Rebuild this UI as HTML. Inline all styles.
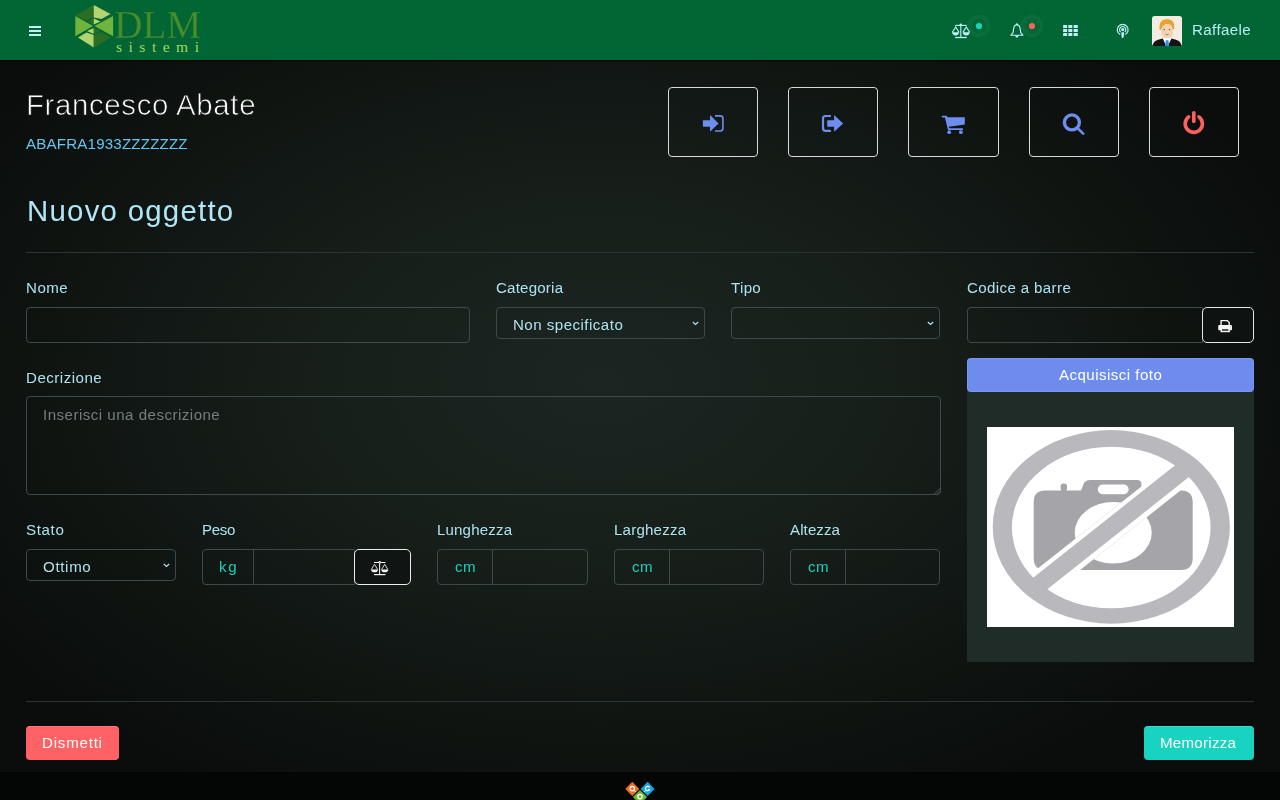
<!DOCTYPE html>
<html><head><meta charset="utf-8">
<style>
*{box-sizing:border-box;margin:0;padding:0}
html,body{width:1280px;height:800px;overflow:hidden}
body{font-family:"Liberation Sans",sans-serif;position:relative;background:#0b0e0d;}
#bg{position:absolute;left:0;top:60px;width:1280px;height:712px;background:radial-gradient(ellipse 58% 66% at 47% 45%, #1c2521 0%, #171f1b 38%, #0f1411 75%, #0a0d0c 100%);}
#foot{position:absolute;left:0;top:772px;width:1280px;height:28px;background:#040505}
#hdr{position:absolute;left:0;top:0;width:1280px;height:60px;background:#016633;}
#hdrsh{position:absolute;left:0;top:60px;width:1280px;height:2px;background:linear-gradient(rgba(0,0,0,.9),rgba(0,0,0,0))}
.abs{position:absolute}
.t{position:absolute;white-space:nowrap;line-height:1;font-size:15.1px;will-change:transform}
.lbl{color:#ade2ef}
.box{position:absolute;border:1px solid #394b4d;border-radius:4px}
.btn5{position:absolute;top:87px;width:90px;height:70px;border:1px solid #d9d9d9;border-radius:4px}
.btn5 svg{position:absolute;left:-1px;top:-1px}
.ibox{position:absolute;top:549px;height:36px;border:1px solid #394b4d;border-radius:4px}
.addon{position:absolute;top:0;left:0;height:34px;border-right:1px solid #394b4d}
.unit{position:absolute;color:#1bd0b9;top:9.2px;white-space:nowrap;line-height:1;font-size:15.1px;will-change:transform}
.chev{position:absolute}
</style></head><body>
<div id="bg"></div>
<div id="foot"></div>
<div id="hdr"></div>
<div id="hdrsh"></div>

<!-- hamburger -->
<svg class="abs" style="left:29px;top:26px" width="12" height="10" viewBox="0 0 12 10">
<rect x="0" y="0" width="12" height="2" fill="#c0f0fa"/>
<rect x="0" y="4" width="12" height="2" fill="#c0f0fa"/>
<rect x="0" y="8" width="12" height="2" fill="#c0f0fa"/>
</svg>

<!-- logo -->
<svg class="abs" style="left:70px;top:0px" width="140" height="60" viewBox="70 0 140 60">
<polygon points="93.75,5 76,15.2 86,20.8 93.75,17" fill="#2a6e25"/>
<polygon points="93.75,5 110.5,14 101.5,19 93.75,17.5" fill="#b3d46f"/>
<polygon points="75.3,16 75.3,36.3 93,26" fill="#6fb43c"/>
<polygon points="113.1,16 113.1,36.3 94.5,26" fill="#6fb43c"/>
<polygon points="87.5,21.5 93.75,18.5 93.75,24.5" fill="#2a6e25"/>
<polygon points="93.75,18.5 100.5,21.5 93.75,24.5" fill="#b3d46f"/>
<polygon points="87,31 93.75,28 93.75,34" fill="#b3d46f"/>
<polygon points="93.75,28 100.5,31 93.75,34" fill="#2a6e25"/>
<polygon points="78,37.5 86.5,32.5 93.75,35 93.75,47.5" fill="#b3d46f"/>
<polygon points="93.75,35 101,32 111,37.5 93.75,47.5" fill="#2a6e25"/>
<text x="114" y="38.3" font-family="Liberation Serif" font-size="40" fill="#4a8d2a" stroke="#016633" stroke-width="0.35" textLength="87" lengthAdjust="spacingAndGlyphs">DLM</text>
<text x="116" y="52.3" font-family="Liberation Serif" font-size="15.5" fill="#a6d65e" textLength="83" lengthAdjust="spacing">sistemi</text>
</svg>

<!-- header right icons -->
<svg class="abs" style="left:940px;top:10px" width="320" height="42" viewBox="940 10 320 42">
<!-- scale -->
<g stroke="#c0f0fa" fill="none" stroke-width="1.1">
<line x1="955.2" y1="25.4" x2="966.7" y2="25.4"/>
<line x1="960.8" y1="25" x2="960.8" y2="37"/>
<line x1="955.2" y1="37.5" x2="966.7" y2="37.5" stroke-width="1.3"/>
<polyline points="952.3,32.4 955.7,27 959,32.4"/>
<polyline points="962.9,32.4 966.3,27 969.7,32.4"/>
</g>
<circle cx="960.8" cy="24.8" r="1.2" fill="#c0f0fa"/>
<path d="M952,32.2 H959.2 Q958.5,35.4 955.6,35.4 Q952.7,35.4 952,32.2Z" fill="#c0f0fa"/>
<path d="M962.6,32.2 H969.8 Q969.1,35.4 966.2,35.4 Q963.3,35.4 962.6,32.2Z" fill="#c0f0fa"/>
<circle cx="979" cy="26" r="9.3" fill="none" stroke="rgba(255,255,255,0.045)" stroke-width="4"/>
<circle cx="979" cy="26" r="3.1" fill="#17d6bd"/>
<!-- bell -->
<path d="M1016.9,24.9 C1014.3,24.9 1013.7,27 1013.5,29.5 L1013.1,32.6 L1010.9,35.2 H1022.9 L1020.7,32.6 L1020.3,29.5 C1020.1,27 1019.5,24.9 1016.9,24.9Z" fill="none" stroke="#c0f0fa" stroke-width="1.15" stroke-linejoin="round"/>
<circle cx="1016.9" cy="24.3" r="1" fill="#c0f0fa"/>
<path d="M1015.2,35.6 H1018.6 Q1018.4,37.7 1016.9,37.7 Q1015.4,37.7 1015.2,35.6Z" fill="#c0f0fa"/>
<circle cx="1032" cy="26" r="9.3" fill="none" stroke="rgba(255,255,255,0.045)" stroke-width="4"/>
<circle cx="1032" cy="26" r="3.1" fill="#fe5f5f"/>
<!-- grid -->
<g fill="#c0f0fa">
<rect x="1063.1" y="25" width="4" height="2.9" rx="0.5"/><rect x="1068.3" y="25" width="4" height="2.9" rx="0.5"/><rect x="1073.6" y="25" width="4.2" height="2.9" rx="0.5"/>
<rect x="1063.1" y="29.1" width="4" height="2.9" rx="0.5"/><rect x="1068.3" y="29.1" width="4" height="2.9" rx="0.5"/><rect x="1073.6" y="29.1" width="4.2" height="2.9" rx="0.5"/>
<rect x="1063.1" y="33.1" width="4" height="2.9" rx="0.5"/><rect x="1068.3" y="33.1" width="4" height="2.9" rx="0.5"/><rect x="1073.6" y="33.1" width="4.2" height="2.9" rx="0.5"/>
</g>
<!-- podcast -->
<path d="M1120.16,34.47 A5.4,5.4 0 1 1 1125.24,34.47" fill="none" stroke="#c0f0fa" stroke-width="1.25"/>
<path d="M1120.68,32.11 A3.15,3.15 0 1 1 1124.72,32.11" fill="none" stroke="#c0f0fa" stroke-width="1.15"/>
<circle cx="1122.7" cy="29.6" r="1.6" fill="#c0f0fa"/>
<path d="M1121.9,32.2 H1123.5 Q1124.2,32.2 1124.1,33 L1123.7,37.2 Q1123.6,37.9 1122.7,37.9 Q1121.8,37.9 1121.7,37.2 L1121.3,33 Q1121.2,32.2 1121.9,32.2Z" fill="#c0f0fa"/>
<!-- avatar -->
<rect x="1152" y="16" width="30" height="30" rx="2.5" fill="#f4ece3"/>
<path d="M1162.6,38.6 H1171.6 L1172,46 H1162.2Z" fill="#fbfbfb"/>
<path d="M1152.8,46 C1153.3,42.5 1155,40.6 1159,39.6 L1162.8,38.6 L1166.2,46Z" fill="#141414"/>
<path d="M1181.4,46 C1180.9,42.5 1179.2,40.6 1175.2,39.6 L1171.4,38.6 L1168,46Z" fill="#141414"/>
<path d="M1165.8,40.2 H1168.4 L1169.2,46 H1165Z" fill="#2a8ef0"/>
<path d="M1161.4,25 H1172.8 V33.5 Q1172.8,38 1167.1,38 Q1161.4,38 1161.4,33.5Z" fill="#f0d3b3"/>
<path d="M1159.6,29.5 C1158.8,23 1161.5,19 1167,19.2 C1172.5,19 1175,22.5 1174.2,29 L1172.8,29.5 C1172.4,26 1171,24 1167.5,24.3 C1164,24 1162,26 1161.3,29.8Z" fill="#e8a22f"/>
<circle cx="1164.3" cy="29.6" r="0.7" fill="#3d3d3d"/><circle cx="1169.6" cy="29.6" r="0.7" fill="#3d3d3d"/>
<path d="M1165.6,34.3 Q1167.1,35.2 1168.6,34.3" stroke="#9a6e60" stroke-width="0.9" fill="none"/>
</svg>
<div class="t" style="left:1192px;top:22.3px;color:#b7ecf6;letter-spacing:0.403px">Raffaele</div>

<!-- name -->
<div class="t" style="left:26px;top:90.1px;font-size:29.4px;color:#ffffff;letter-spacing:0.637px;-webkit-text-stroke:0.75px #0e1211">Francesco Abate</div>
<div class="t" style="left:26px;top:136.4px;color:#64c7ef;letter-spacing:0.193px">ABAFRA1933ZZZZZZZ</div>

<!-- 5 buttons -->
<div class="btn5" style="left:668px"><svg width="90" height="70" viewBox="668 87 90 70">
<path d="M702.9,120.2 H710 V114.9 L718.6,123.4 L710,131.8 V126.7 H702.9Z" fill="#6d8df0"/>
<path d="M715,115.9 H720.3 Q722.9,115.9 722.9,118.5 V128.3 Q722.9,131 720.3,131 H715" fill="none" stroke="#6d8df0" stroke-width="1.6"/>
</svg></div>
<div class="btn5" style="left:788px"><svg width="90" height="70" viewBox="788 87 90 70">
<path d="M797.2,120.2 H804.1 V114.9 L813.1,123.4 L804.1,131.8 V126.7 H797.2Z" transform="translate(30,0)" fill="#6d8df0"/>
<path d="M830.9,116 H825.5 Q823,116 823,118.5 V128.3 Q823,130.8 825.5,130.8 H830.9" fill="none" stroke="#6d8df0" stroke-width="2.2"/>
</svg></div>
<div class="btn5" style="left:908px;width:91px"><svg width="91" height="70" viewBox="908 87 91 70">
<path d="M942.6,115.8 H946.6 L947.6,117.2 H964.8 V124.5 L948.8,126.8 L949.4,128.2 H963 V130 H948 L944.9,117.5 H942.6 Q941.8,117.5 941.8,116.6 Q941.8,115.8 942.6,115.8Z" fill="#6d8df0"/>
<circle cx="949.2" cy="132.2" r="1.9" fill="#6d8df0"/>
<circle cx="960.9" cy="132.2" r="1.9" fill="#6d8df0"/>
</svg></div>
<div class="btn5" style="left:1029px"><svg width="90" height="70" viewBox="1029 87 90 70">
<circle cx="1071.9" cy="122.4" r="7.5" fill="none" stroke="#6d8df0" stroke-width="3.4"/>
<line x1="1077.6" y1="128.2" x2="1083.2" y2="133.6" stroke="#6d8df0" stroke-width="2.6" stroke-linecap="round"/>
</svg></div>
<div class="btn5" style="left:1149px"><svg width="90" height="70" viewBox="1149 87 90 70">
<path d="M1188.6,116.9 A8.6,8.6 0 1 0 1199,116.9" fill="none" stroke="#fd6060" stroke-width="3.6" stroke-linecap="round"/>
<line x1="1193.8" y1="112.8" x2="1193.8" y2="121.5" stroke="#fd6060" stroke-width="3.6" stroke-linecap="round"/>
</svg></div>

<div class="t" style="left:26.6px;top:196px;font-size:29.4px;color:#b0e6f7;letter-spacing:1.253px">Nuovo oggetto</div>
<div class="abs" style="left:26px;top:252px;width:1228px;height:1px;background:#2b3432"></div>

<div class="t lbl" style="left:26px;top:280.2px;letter-spacing:0.502px">Nome</div>
<div class="t lbl" style="left:496px;top:280.2px;letter-spacing:0.197px">Categoria</div>
<div class="t lbl" style="left:731px;top:280.2px;letter-spacing:0.322px">Tipo</div>
<div class="t lbl" style="left:967px;top:280.2px;letter-spacing:0.367px">Codice a barre</div>

<div class="box" style="left:26px;top:307px;width:444px;height:36px"></div>
<div class="box" style="left:496px;top:307px;width:209px;height:32px">
<div class="t" style="left:16px;top:9.4px;color:#ade2ef;letter-spacing:0.47px">Non specificato</div>
<svg class="chev" style="left:194px;top:12px" width="9" height="7" viewBox="0 0 9 7"><polyline points="1.8,2 4.5,4.5 7.2,2" fill="none" stroke="#b3e6f2" stroke-width="1.15"/></svg>
</div>
<div class="box" style="left:731px;top:307px;width:209px;height:32px">
<svg class="chev" style="left:194px;top:12px" width="9" height="7" viewBox="0 0 9 7"><polyline points="1.8,2 4.5,4.5 7.2,2" fill="none" stroke="#b3e6f2" stroke-width="1.15"/></svg>
</div>
<div class="box" style="left:967px;top:307px;width:236px;height:36px;border-radius:4px 0 0 4px"></div>
<div class="abs" style="left:1202px;top:307px;width:52px;height:36px;border:1.2px solid #e6e6e6;border-radius:5px;background:#0e1311">
<svg class="abs" style="left:-1.2px;top:-1.2px" width="52" height="36" viewBox="1202 307 52 36">
<path d="M1221.1,325.5 V320.6 H1227.3 L1229.2,322.5 V325.5" fill="none" stroke="#f4f4f4" stroke-width="1.4"/>
<rect x="1218.2" y="325" width="13.8" height="5.2" rx="1" fill="#f4f4f4"/>
<rect x="1220.5" y="329" width="9.4" height="3.2" fill="#f4f4f4"/>
<rect x="1222" y="329.3" width="6.4" height="1.4" fill="#0e1311"/>
<rect x="1230.2" y="326" width="0.9" height="0.8" fill="#9a9a9a"/>
</svg>
</div>

<div class="abs" style="left:967px;top:391px;width:287px;height:271px;background:#202c27"></div>
<div class="abs" style="left:967px;top:358px;width:287px;height:34px;background:#6d8cee;border-radius:4px;box-shadow:inset 0 0 0 1px rgba(255,255,255,.1)"></div>
<div class="t" style="left:1058.5px;top:367.4px;color:#ffffff;letter-spacing:0.45px">Acquisisci foto</div>

<!-- no camera image -->
<svg class="abs" style="left:987px;top:427px" width="247" height="200" viewBox="0 0 247 200">
<rect width="247" height="200" fill="#ffffff"/>
<defs><clipPath id="cut"><path d="M0,0 H247 V200 H0Z M-8.8,188.8 L241.7,-9.6 L258.7,11.8 L8.2,210.3Z" clip-rule="evenodd"/></clipPath></defs>
<g clip-path="url(#cut)">
<path d="M58,63.4 H94 L97,56 Q99,53.1 103,53.1 H150 Q154.4,53.1 154.4,57 V63.4 H194 Q205.7,63.4 205.7,75 V131 Q205.7,142.9 194,142.9 H58 Q46.7,142.9 46.7,131 V75 Q46.7,63.4 58,63.4Z" fill="#a5a4a9"/>
<rect x="73.6" y="56.5" width="6.4" height="8" rx="3" fill="#a5a4a9"/>
<rect x="110.8" y="57.5" width="30.8" height="9.7" rx="4.8" fill="#ffffff"/>
<ellipse cx="126.2" cy="105.7" rx="38.5" ry="30.8" fill="#ffffff"/>
</g>
<clipPath id="ring"><ellipse cx="124.3" cy="99.9" rx="118.6" ry="96.8"/></clipPath>
<path d="M5.7,99.9 A118.6,96.8 0 1 0 242.9,99.9 A118.6,96.8 0 1 0 5.7,99.9Z M24.9,100.5 A99.35,80.75 0 1 0 223.6,100.5 A99.35,80.75 0 1 0 24.9,100.5Z" fill="#b9b8bd" fill-rule="evenodd"/>
<g clip-path="url(#ring)"><line x1="38.4" y1="168.3" x2="210.9" y2="31.6" stroke="#b9b8bd" stroke-width="17.8"/></g>
</svg>

<div class="t lbl" style="left:26px;top:370.2px;letter-spacing:0.496px">Decrizione</div>
<div class="box" style="left:26px;top:396px;width:915px;height:99px">
<div class="t" style="left:16px;top:10.2px;color:#777d80;letter-spacing:0.479px">Inserisci una descrizione</div>
<svg class="abs" style="right:-0.5px;bottom:-0.5px" width="8" height="8" viewBox="0 0 8 8"><line x1="1" y1="7.5" x2="7.5" y2="1" stroke="#56605f" stroke-width="0.9"/><line x1="4" y1="7.5" x2="7.5" y2="4" stroke="#56605f" stroke-width="0.9"/></svg>
</div>

<div class="t lbl" style="left:26px;top:522.2px;letter-spacing:0.632px">Stato</div>
<div class="t lbl" style="left:202px;top:522.2px;letter-spacing:-0.3px">Peso</div>
<div class="t lbl" style="left:437px;top:522.2px;letter-spacing:0.146px">Lunghezza</div>
<div class="t lbl" style="left:614px;top:522.2px;letter-spacing:0.192px">Larghezza</div>
<div class="t lbl" style="left:790px;top:522.2px;letter-spacing:0.087px">Altezza</div>

<div class="box" style="left:26px;top:549px;width:150px;height:32px">
<div class="t" style="left:16px;top:9.4px;color:#ade2ef;letter-spacing:0.664px">Ottimo</div>
<svg class="chev" style="left:135px;top:12px" width="9" height="7" viewBox="0 0 9 7"><polyline points="1.8,2 4.5,4.5 7.2,2" fill="none" stroke="#b3e6f2" stroke-width="1.15"/></svg>
</div>

<div class="ibox" style="left:202px;width:153px;border-radius:4px 0 0 4px">
<div class="addon" style="width:51px"></div>
<div class="unit" style="left:16.3px;letter-spacing:1.8px">kg</div>
</div>
<div class="abs" style="left:354px;top:549px;width:57px;height:36px;border:1.3px solid #ececec;border-radius:5px;background:#101513">
<svg class="abs" style="left:-1.3px;top:-1.3px" width="57" height="36" viewBox="354 549 57 36">
<g stroke="#f4f4f4" fill="none" stroke-width="1.05">
<line x1="374" y1="562.5" x2="385.4" y2="562.5"/>
<line x1="379.6" y1="562.5" x2="379.6" y2="574.4"/>
<line x1="374" y1="574.6" x2="385.4" y2="574.6" stroke-width="1.2"/>
<polyline points="371.3,569.6 374.5,564.3 377.7,569.6" stroke-width="0.85"/>
<polyline points="381.5,569.6 384.7,564.3 387.9,569.6" stroke-width="0.85"/>
</g>
<circle cx="379.6" cy="562.3" r="1.25" fill="#f4f4f4"/>
<circle cx="379.6" cy="562.4" r="0.45" fill="#111"/>
<path d="M371,569.4 H378.1 Q377.6,572.3 374.55,572.3 Q371.5,572.3 371,569.4Z" fill="#f4f4f4"/>
<path d="M381.2,569.4 H388.3 Q387.8,572.3 384.75,572.3 Q381.7,572.3 381.2,569.4Z" fill="#f4f4f4"/>
</svg>
</div>

<div class="ibox" style="left:437px;width:151px">
<div class="addon" style="width:55px"></div>
<div class="unit" style="left:16.8px;letter-spacing:0.4px">cm</div>
</div>
<div class="ibox" style="left:614px;width:150px">
<div class="addon" style="width:55px"></div>
<div class="unit" style="left:16.8px;letter-spacing:0.4px">cm</div>
</div>
<div class="ibox" style="left:790px;width:150px">
<div class="addon" style="width:55px"></div>
<div class="unit" style="left:16.8px;letter-spacing:0.4px">cm</div>
</div>

<div class="abs" style="left:26px;top:701px;width:1228px;height:1px;background:#2b3432"></div>
<div class="abs" style="left:26px;top:726px;width:93px;height:34px;background:#ff6265;border-radius:4px;box-shadow:inset 0 1px 0 rgba(255,255,255,.15)"></div>
<div class="t" style="left:42px;top:735.2px;color:#fff;letter-spacing:0.781px">Dismetti</div>
<div class="abs" style="left:1144px;top:726px;width:110px;height:34px;background:#18d3bf;border-radius:4px;box-shadow:inset 0 1px 0 rgba(255,255,255,.15)"></div>
<div class="t" style="left:1160px;top:735.2px;color:#fff;letter-spacing:0.277px">Memorizza</div>

<!-- bottom logo -->
<svg class="abs" style="left:620px;top:778px" width="40" height="22" viewBox="620 778 40 22">
<rect x="627.3" y="783.9" width="10" height="10" transform="rotate(45 632.3 788.9)" fill="#f26b22"/>
<rect x="642.6" y="783.9" width="10" height="10" transform="rotate(45 647.6 788.9)" fill="#13a4ec"/>
<rect x="635" y="792" width="10" height="10" transform="rotate(45 640 797)" fill="#6cba2e"/>
<circle cx="632.3" cy="788.6" r="2.2" fill="none" stroke="#fff" stroke-width="1.2"/><line x1="633.8" y1="790.2" x2="635.6" y2="792" stroke="#fff" stroke-width="1"/>
<path d="M649.6,787.6 A2.2,2.2 0 1 0 649.6,789.6 H647.8" fill="none" stroke="#fff" stroke-width="1.2"/><line x1="645.8" y1="790.3" x2="644.4" y2="792" stroke="#fff" stroke-width="1"/>
<circle cx="640" cy="796.5" r="2.2" fill="none" stroke="#fff" stroke-width="1.2"/><line x1="640" y1="798.7" x2="640" y2="800" stroke="#fff" stroke-width="1.2"/>
</svg>

</body></html>
